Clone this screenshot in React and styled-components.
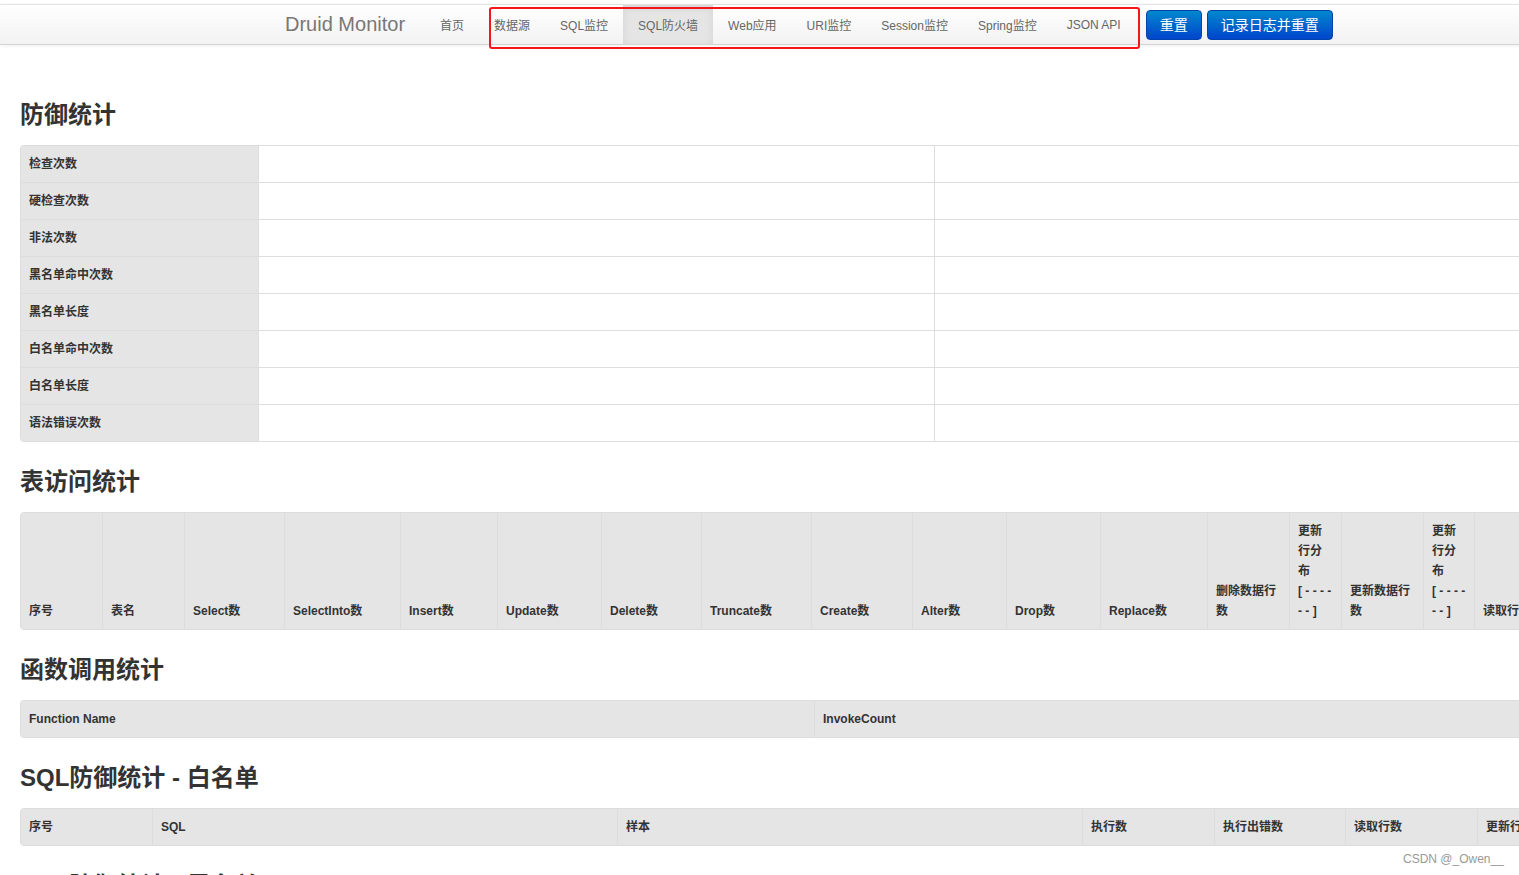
import React from "react";
import styled, { createGlobalStyle } from "styled-components";

const GlobalStyle = createGlobalStyle`
	html, body {
		margin: 0;
		padding: 0;
		overflow: hidden;
		background: #fff;
	}
	body {
		font-family: "Liberation Sans", Arial, "Noto Sans CJK SC", sans-serif;
		font-size: 12px;
		color: #333;
	}
`;

const navItems = ["数据源", "SQL监控", "SQL防火墙", "Web应用", "URI监控", "Session监控", "Spring监控", "JSON API"];

const defenceRows = ["检查次数", "硬检查次数", "非法次数", "黑名单命中次数", "黑名单长度", "白名单命中次数", "白名单长度", "语法错误次数"];

const tableCols = [
	{ w: 82, t: "序号" },
	{ w: 82, t: "表名" },
	{ w: 100, t: "Select数" },
	{ w: 116, t: "SelectInto数" },
	{ w: 97, t: "Insert数" },
	{ w: 104, t: "Update数" },
	{ w: 100, t: "Delete数" },
	{ w: 110, t: "Truncate数" },
	{ w: 101, t: "Create数" },
	{ w: 94, t: "Alter数" },
	{ w: 94, t: "Drop数" },
	{ w: 107, t: "Replace数" },
	{ w: 82, t: ["删除数据行", "数"] },
	{ w: 52, t: ["更新", "行分", "布", "[ - - - -", "- - ]"] },
	{ w: 82, t: ["更新数据行", "数"] },
	{ w: 51, t: ["更新", "行分", "布", "[ - - - -", "- - ]"] },
	{ w: 82, t: "读取行数" },
	{ w: 82, t: "读取行分布" },
];

const whiteCols = [
	{ w: 132, t: "序号" },
	{ w: 465, t: "SQL" },
	{ w: 465, t: "样本" },
	{ w: 132, t: "执行数" },
	{ w: 131, t: "执行出错数" },
	{ w: 132, t: "读取行数" },
	{ w: 132, t: "更新行数" },
];

const App = () => {
	return (
		<>
			<GlobalStyle />
			<Page>
				<Navbar>
					<Brand>Druid Monitor</Brand>
					<NavItem>首页</NavItem>
					<Marked>
						{navItems.map((item) => (
							<NavItem key={item} active={item === "SQL防火墙"}>
								{item}
							</NavItem>
						))}
					</Marked>
					<Button>重置</Button>
					<Button>记录日志并重置</Button>
				</Navbar>

				<Content>
					<Title>防御统计</Title>
					<Table width={1610}>
						<colgroup>
							<col width={238} />
							<col width={676} />
							<col width={696} />
						</colgroup>
						<tbody>
							{defenceRows.map((row) => (
								<tr key={row}>
									<Th>{row}</Th>
									<Td />
									<Td />
								</tr>
							))}
						</tbody>
					</Table>

					<Title>表访问统计</Title>
					<Table width={1618}>
						<colgroup>
							{tableCols.map((c, i) => (
								<col key={i} width={c.w} />
							))}
						</colgroup>
						<thead>
							<tr>
								{tableCols.map((c, i) => (
									<HeadTh key={i}>
										{Array.isArray(c.t)
											? c.t.map((line, j) => (
													<React.Fragment key={j}>
														{j > 0 && <br />}
														{line}
													</React.Fragment>
											  ))
											: c.t}
									</HeadTh>
								))}
							</tr>
						</thead>
					</Table>

					<Title>函数调用统计</Title>
					<Table width={1590}>
						<colgroup>
							<col width={794} />
							<col width={796} />
						</colgroup>
						<thead>
							<tr>
								<HeadTh>Function Name</HeadTh>
								<HeadTh>InvokeCount</HeadTh>
							</tr>
						</thead>
					</Table>

					<Title>SQL防御统计 - 白名单</Title>
					<Table width={1589}>
						<colgroup>
							{whiteCols.map((c, i) => (
								<col key={i} width={c.w} />
							))}
						</colgroup>
						<thead>
							<tr>
								{whiteCols.map((c, i) => (
									<HeadTh key={i}>{c.t}</HeadTh>
								))}
							</tr>
						</thead>
					</Table>

					<Title>SQL防御统计 - 黑名单</Title>
				</Content>

				<Watermark>CSDN @_Owen__</Watermark>
			</Page>
		</>
	);
};

const Page = styled.div`
	width: 1700px;
	padding-top: 4px;
	position: relative;
	min-height: 871px;
`;

const Navbar = styled.div`
	display: flex;
	align-items: center;
	height: 39px;
	padding-left: 265px;
	border-top: 1px solid #e3e3e3;
	border-bottom: 1px solid #d4d4d4;
	background: linear-gradient(to bottom, #ffffff, #f2f2f2);
	box-shadow: 0 1px 4px rgba(0, 0, 0, 0.065);
`;

const Brand = styled.div`
	padding: 10px 20px;
	font-size: 20px;
	line-height: 19px;
	color: #777;
`;

const Marked = styled.div`
	display: flex;
	align-self: stretch;
	position: relative;

	&::after {
		content: "";
		position: absolute;
		left: 10px;
		right: -4px;
		top: 2px;
		bottom: -5px;
		border: 2.5px solid #f5161b;
		border-radius: 3px;
		pointer-events: none;
	}
`;

const NavItem = styled.div`
	display: flex;
	align-items: center;
	align-self: stretch;
	padding: 0 15px;
	font-size: 12px;
	color: #666;
	background: ${({ active }) => (active ? "#e5e5e5" : "transparent")};
	box-shadow: ${({ active }) => (active ? "inset 0 3px 8px rgba(0, 0, 0, 0.08)" : "none")};
`;

const Button = styled.button`
	margin-left: 5px;
	padding: 4px 13px;
	height: 30px;
	font-family: "Liberation Sans", "Noto Sans CJK SC", sans-serif;
	font-size: 14px;
	line-height: 20px;
	color: #fff;
	border: 1px solid #0044aa;
	border-radius: 4px;
	background: linear-gradient(to bottom, #0088cc, #0044cc);
	cursor: pointer;

	&:first-of-type {
		margin-left: 10px;
	}
`;

const Content = styled.div`
	padding: 50px 0 0 20px;
`;

const Title = styled.h3`
	margin: 0 0 10px;
	font-size: 24px;
	line-height: 40px;
	font-weight: 700;
	color: #333;
	font-family: "Liberation Sans", "Noto Sans CJK SC", sans-serif;
`;

const Table = styled.table`
	width: ${({ width }) => width}px;
	table-layout: fixed;
	border-collapse: separate;
	border-spacing: 0;
	border: 1px solid #ddd;
	border-left: 0;
	border-radius: 4px;
	margin-bottom: 20px;

	tr:first-child > * {
		border-top: 0;
	}
	tr > *:first-child {
		border-radius: 0;
	}
	tr:first-child > *:first-child {
		border-top-left-radius: 4px;
	}
	tr:last-child > *:first-child {
		border-bottom-left-radius: 4px;
	}
`;

const Th = styled.th`
	padding: 8px;
	line-height: 20px;
	text-align: left;
	font-size: 12px;
	font-weight: 700;
	color: #333;
	background: #e5e5e5;
	border-left: 1px solid #ddd;
	border-top: 1px solid #ddd;
`;

const HeadTh = styled(Th)`
	vertical-align: bottom;
	word-break: break-all;
`;

const Td = styled.td`
	padding: 8px;
	height: 20px;
	line-height: 20px;
	border-left: 1px solid #ddd;
	border-top: 1px solid #ddd;
`;

const Watermark = styled.div`
	position: absolute;
	left: 1403px;
	top: 852px;
	font-size: 12px;
	color: #999;
	background: #fff;
`;

export default App;
